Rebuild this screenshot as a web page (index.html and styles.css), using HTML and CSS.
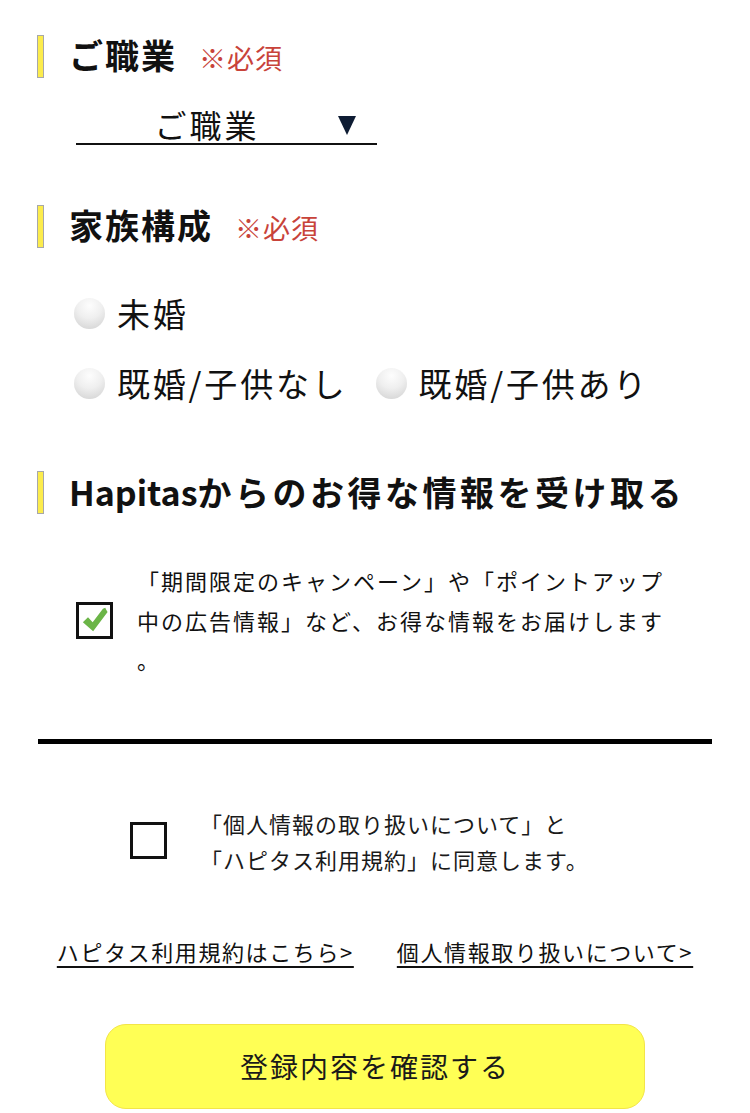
FILE: index.html
```html
<!DOCTYPE html>
<html lang="ja">
<head>
  <meta charset="utf-8">
  <title>会員登録 - Hapitas</title>
  <meta name="viewport" content="width=device-width, initial-scale=1.0">
  <link rel="stylesheet" href="styles.css">
</head>
<body>
  <div class="page">
    <section class="field">
      <h2 class="field-title"><span class="title-label">ご職業<span class="required">※必須</span></span></h2>
      <div class="select-box">
        <span class="select-value">ご職業</span>
        <span class="select-arrow"></span>
      </div>
    </section>

    <section class="field family">
      <h2 class="field-title"><span class="title-label">家族構成<span class="required">※必須</span></span></h2>
      <div class="radio-list">
        <div class="radio-row">
          <label class="radio"><span class="radio-dot"></span>未婚</label>
        </div>
        <div class="radio-row">
          <label class="radio"><span class="radio-dot"></span>既婚/子供なし</label>
          <label class="radio"><span class="radio-dot"></span>既婚/子供あり</label>
        </div>
      </div>
    </section>

    <section class="field news">
      <h2 class="field-title"><span class="title-label"><span class="latin">Hapitas</span>からのお得な情報を受け取る</span></h2>
      <div class="news-check">
        <span class="check-box">
          <svg class="check-mark" viewBox="0 0 30 30" width="28" height="28">
            <path d="M2 17.5 L7.5 12 L12.5 17.5 L23.5 3 L26 2 L27 4 L28.5 6.5 L13 27 Z" fill="#6bb547"/>
          </svg>
        </span>
        <p class="news-text">「期間限定のキャンペーン」や「ポイントアップ中の広告情報」など、お得な情報をお届けします。</p>
      </div>
    </section>

    <hr class="divider">

    <div class="agree">
      <span class="check-box empty"></span>
      <p class="agree-text">「個人情報の取り扱いについて」と<br>「ハピタス利用規約」に同意します。</p>
    </div>

    <div class="links">
      <a href="#">ハピタス利用規約はこちら&gt;</a>
      <a href="#">個人情報取り扱いについて&gt;</a>
    </div>

    <div class="submit-wrap">
      <button class="submit">登録内容を確認する</button>
    </div>
  </div>
</body>
</html>
```

FILE: styles.css
```css
    body {
      margin: 0;
      background: #fff;
      color: #111;
      font-family: "Noto Sans CJK JP", "Noto Sans", sans-serif;
    }
    .page {
      width: 750px;
      padding: 34px 37px 0;
      box-sizing: border-box;
    }

    /* section titles */
    .field-title {
      display: flex;
      align-items: center;
      height: 44px;
      margin: 0;
      font-size: 34px;
      font-weight: bold;
      letter-spacing: 2px;
      line-height: 44px;
    }
    .field-title::before {
      content: "";
      width: 5px;
      height: 41px;
      background-color: #fcec4c;
      border: 1.5px solid #a8a8a8;
      margin-right: 25px;
      flex-shrink: 0;
    }
    .title-label {
      white-space: nowrap;
    }
    .required {
      margin-left: 22px;
      font-size: 27px;
      font-weight: normal;
      letter-spacing: 1px;
      color: #c8433a;
    }

    /* occupation select */
    .select-box {
      display: flex;
      align-items: center;
      width: 301px;
      height: 44px;
      margin: 23px 0 0 39px;
      padding-top: 4px;
      border-bottom: 2px solid #111;
      box-sizing: border-box;
    }
    .select-value {
      flex: 1;
      text-align: center;
      font-size: 32px;
      letter-spacing: 3px;
      line-height: 38px;
    }
    .select-arrow {
      width: 0;
      height: 0;
      margin: 2px 21px 0 0;
      border-left: 9.5px solid transparent;
      border-right: 9.5px solid transparent;
      border-top: 19px solid #0e1c33;
    }

    /* family radios */
    .family {
      margin-top: 59px;
    }
    .radio-list {
      display: flex;
      flex-direction: column;
      gap: 20px;
      margin: 40px 0 0 37px;
    }
    .radio-row {
      display: flex;
      align-items: center;
      gap: 28px;
      height: 50px;
    }
    .radio {
      display: flex;
      align-items: center;
      gap: 12px;
      font-size: 33px;
      letter-spacing: 2.8px;
      white-space: nowrap;
    }
    .radio-dot {
      width: 31px;
      height: 31px;
      border-radius: 50%;
      background: radial-gradient(circle at 50% 25%, #fdfdfd 0%, #efefef 45%, #cfcfcf 100%);
    }

    /* newsletter */
    .news {
      margin-top: 62px;
    }
    .news .field-title {
      letter-spacing: 3.5px;
    }
    .latin {
      letter-spacing: 0;
    }
    .news-check {
      display: flex;
      align-items: center;
      gap: 24px;
      margin: 47px 0 0 39px;
    }
    .check-box {
      display: flex;
      align-items: center;
      justify-content: center;
      width: 37px;
      height: 37px;
      border: 3px solid #111;
      box-sizing: border-box;
      flex-shrink: 0;
    }
    .news-text {
      width: 540px;
      margin: 0;
      font-size: 22px;
      letter-spacing: 2px;
      line-height: 39.5px;
      line-break: anywhere;
    }

    .divider {
      height: 5px;
      margin: 59px 1px 0;
      border: none;
      background-color: #000;
    }

    /* agreement */
    .agree {
      display: flex;
      align-items: center;
      gap: 33px;
      margin: 61px 0 0 93px;
    }
    .agree-text {
      margin: 0;
      font-size: 22px;
      letter-spacing: 1px;
      line-height: 36px;
      color: #1a1a1a;
    }

    .links {
      display: flex;
      justify-content: center;
      gap: 43px;
      margin-top: 56px;
    }
    .links a {
      color: #111;
      font-size: 22px;
      letter-spacing: 1.6px;
      line-height: 36px;
      text-underline-offset: 5px;
      text-decoration-thickness: 1.5px;
    }

    .submit-wrap {
      display: flex;
      justify-content: center;
      margin-top: 55px;
    }
    .submit {
      width: 540px;
      height: 85px;
      background-color: #ffff55;
      border: 1.5px solid #f3e547;
      border-radius: 21px;
      font-family: inherit;
      font-size: 28px;
      letter-spacing: 2px;
      color: #1a1a1a;
      cursor: pointer;
    }
```
